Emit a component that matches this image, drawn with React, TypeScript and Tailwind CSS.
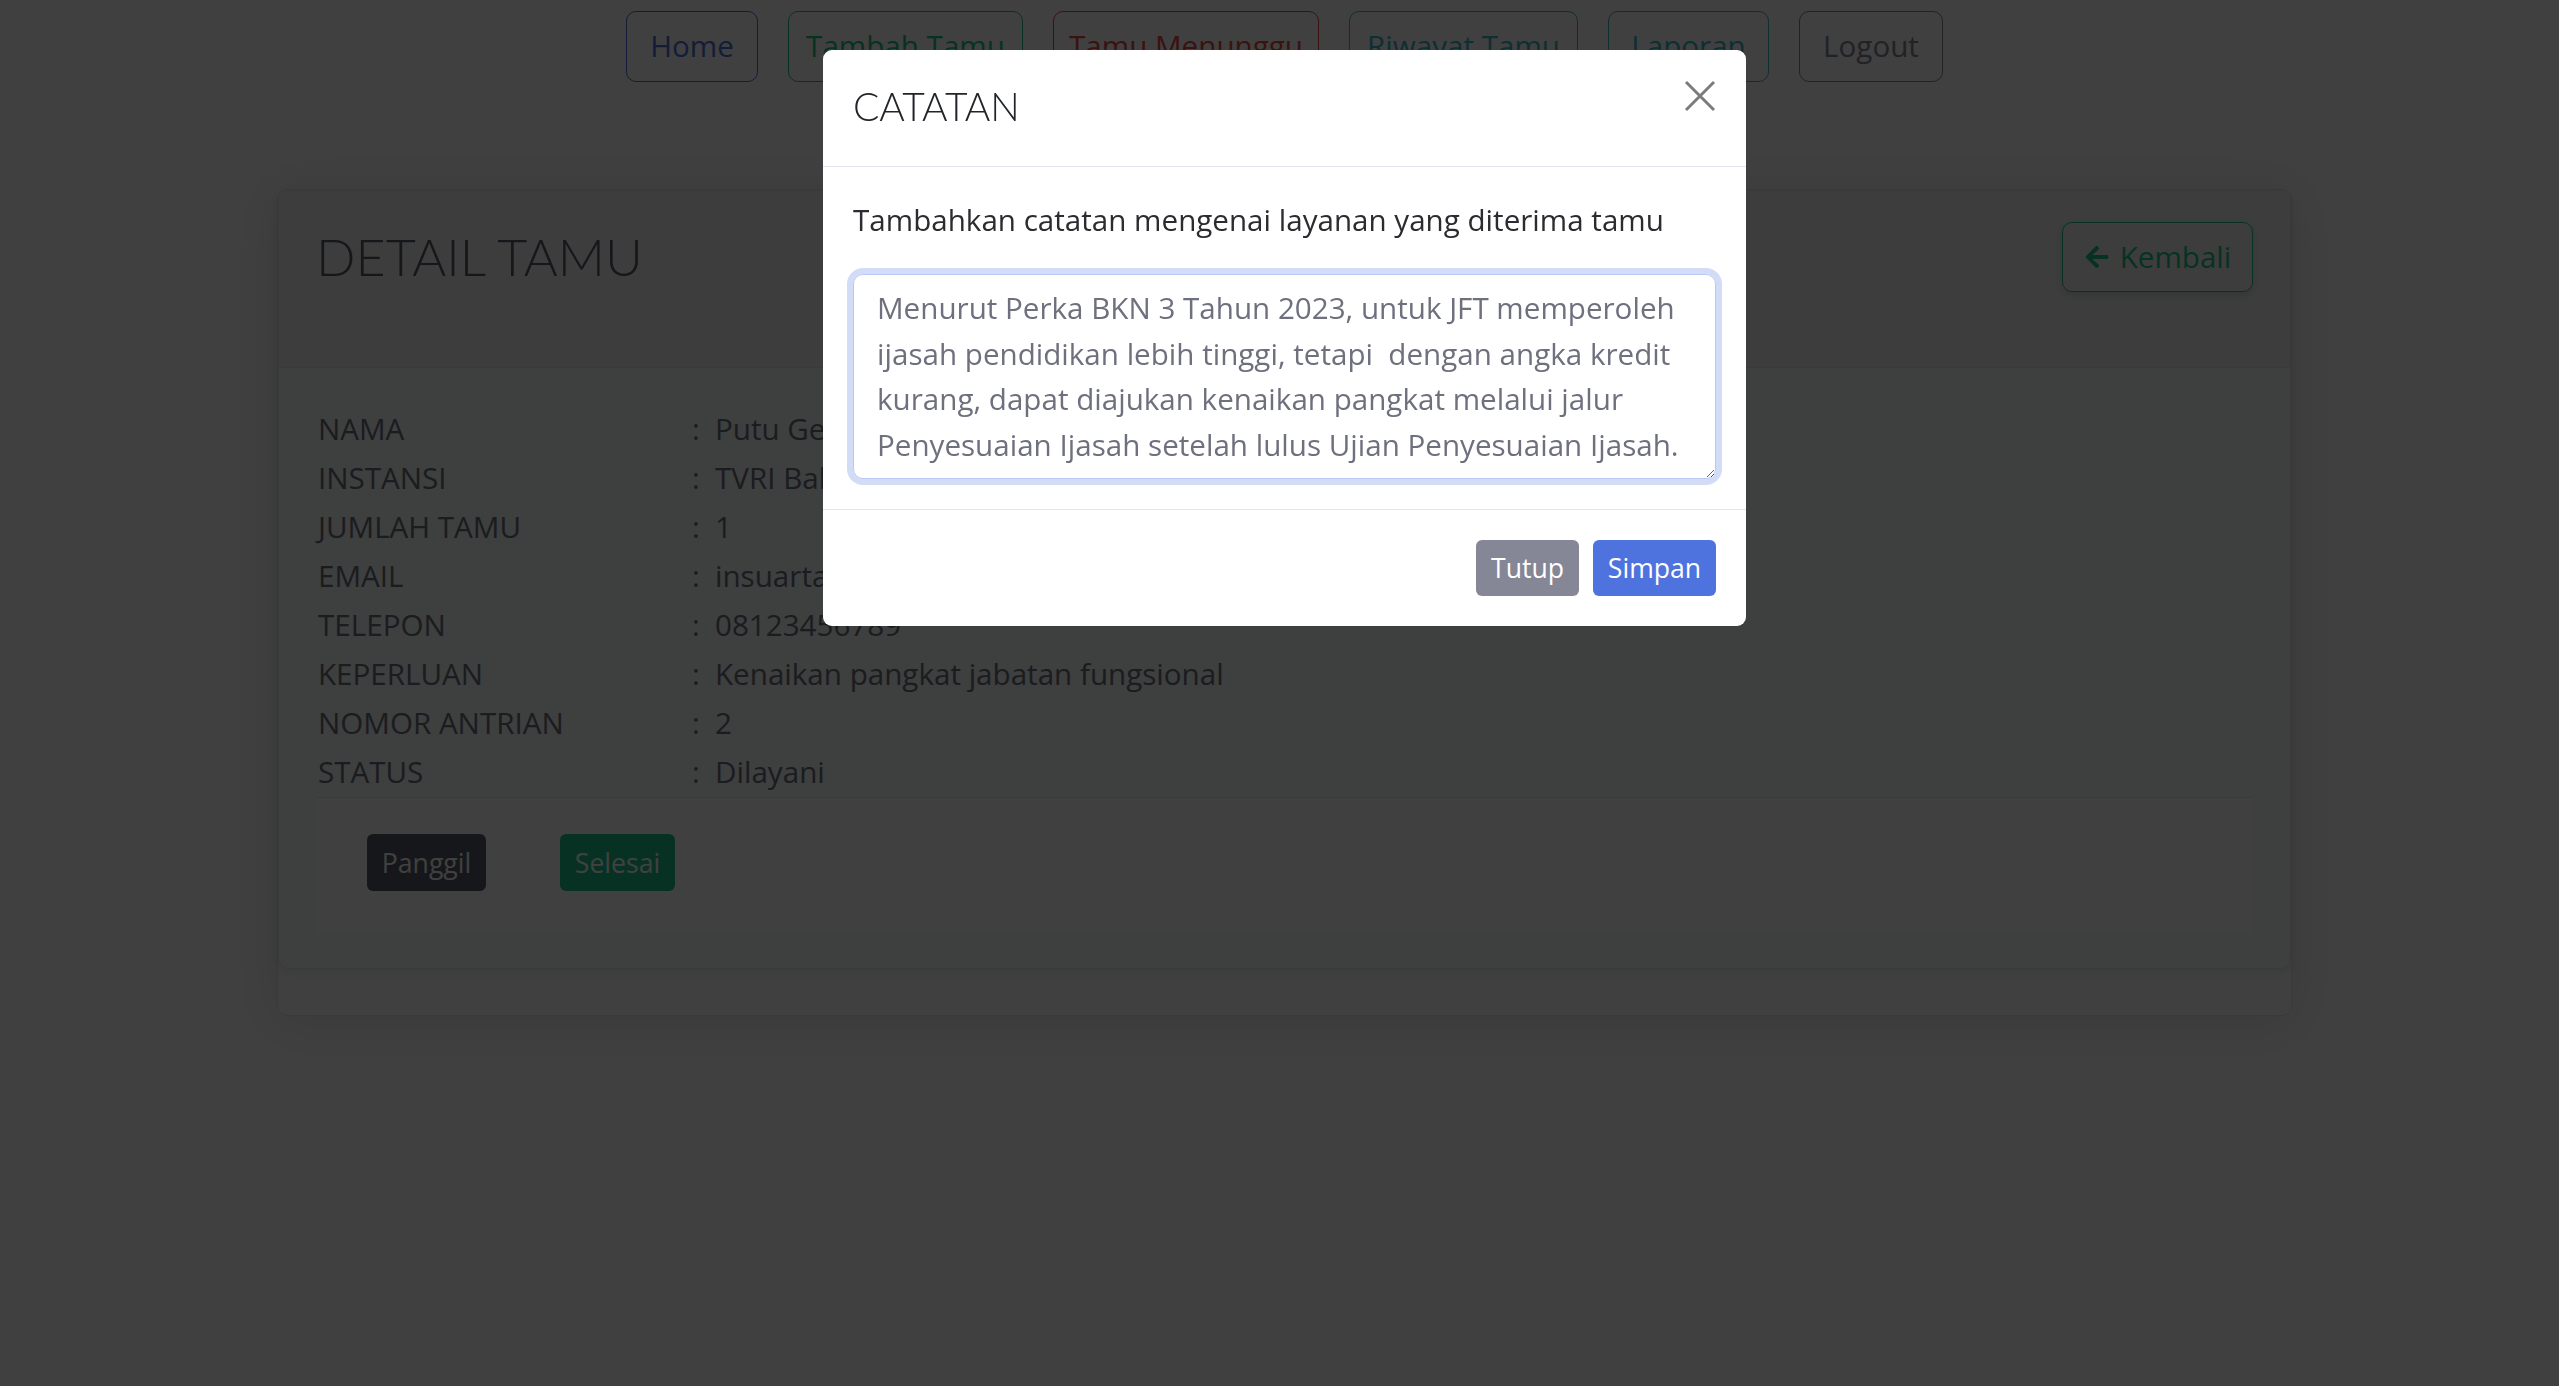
import { useEffect, useRef } from "react";
import { FaArrowLeft } from "react-icons/fa";

const navItems = [
  { label: "Home", cls: "w-[132px] border-[#4e73df] text-[#4e73df]" },
  { label: "Tambah Tamu", cls: "w-[235px] border-[#1cc88a] text-[#1cc88a]" },
  { label: "Tamu Menunggu", cls: "w-[266px] border-[#e74a3b] text-[#e74a3b]" },
  { label: "Riwayat Tamu", cls: "w-[229px] border-[#36b9cc] text-[#36b9cc]" },
  { label: "Laporan", cls: "w-[161px] border-[#36b9cc] text-[#36b9cc]" },
  { label: "Logout", cls: "w-[144px] border-[#858796] text-[#858796]" },
];

const details = [
  ["NAMA", "Putu Gede Insuarta"],
  ["INSTANSI", "TVRI Bali"],
  ["JUMLAH TAMU", "1"],
  ["EMAIL", "insuarta@gmail.com"],
  ["TELEPON", "08123456789"],
  ["KEPERLUAN", "Kenaikan pangkat jabatan fungsional"],
  ["NOMOR ANTRIAN", "2"],
  ["STATUS", "Dilayani"],
];

const note =
  "Menurut Perka BKN 3 Tahun 2023, untuk JFT memperoleh ijasah pendidikan lebih tinggi, tetapi  dengan angka kredit kurang, dapat diajukan kenaikan pangkat melalui jalur Penyesuaian Ijasah setelah lulus Ujian Penyesuaian Ijasah.";

function NoteModal() {
  const ref = useRef<HTMLTextAreaElement>(null);

  useEffect(() => {
    const el = ref.current;
    if (el) {
      el.focus();
      el.setSelectionRange(note.length, note.length);
    }
  }, []);

  return (
    <>
      <div className="fixed inset-0 z-40 bg-black/75" />
      <div className="fixed inset-0 z-50 flex items-start justify-center pl-[10px] pt-[50px]">
        <div className="w-[923px] overflow-hidden rounded-[9px] bg-white">
          <div className="flex h-[117px] items-start justify-between border-b border-[#e3e6f0] px-[30px] pt-[33px]">
            <h5 className="font-['Lato',sans-serif] text-[39px] font-light leading-[46px] text-[#212529]">
              CATATAN
            </h5>
            <button className="mt-[-3px] flex h-[32px] w-[32px] items-center justify-center">
              <svg width="32" height="32" viewBox="0 0 32 32">
                <path d="M2 2 L30 30 M30 2 L2 30" stroke="#7c7c7c" strokeWidth="3" />
              </svg>
            </button>
          </div>

          <div className="px-[30px] pb-[30px] pt-[30px]">
            <p className="mb-[32px] text-[29.6px] leading-[45px] text-[#2b2c30]">
              Tambahkan catatan mengenai layanan yang diterima tamu
            </p>
            <textarea
              ref={ref}
              defaultValue={note}
              rows={4}
              className="block h-[205px] w-full resize-y rounded-[10px] border border-[#bac8f3] px-[23px] py-[10px] text-[29.6px] leading-[45.6px] text-[#6e707e] caret-[#6e707e] shadow-[0_0_0_6px_rgba(78,115,223,0.25)] outline-none"
            />
          </div>

          <div className="flex items-center justify-end gap-[14px] border-t border-[#e3e6f0] px-[30px] pb-[30px] pt-[30px]">
            <button className="h-[56px] w-[103px] rounded-[6px] bg-[#858796] text-[26.6px] leading-[40px] text-white">
              Tutup
            </button>
            <button className="h-[56px] w-[123px] rounded-[6px] bg-[#4e73df] text-[26.6px] leading-[40px] text-white">
              Simpan
            </button>
          </div>
        </div>
      </div>
    </>
  );
}

export default function App() {
  return (
    <div className="relative h-screen overflow-hidden bg-white pl-[10px] font-['Open_Sans',sans-serif]">
      <nav className="flex justify-center gap-[30px] pt-[11px]">
        {navItems.map((item) => (
          <button
            key={item.label}
            className={`h-[71px] rounded-[10px] border bg-transparent text-[29.6px] leading-[44.4px] ${item.cls}`}
          >
            {item.label}
          </button>
        ))}
      </nav>

      <div className="mx-auto mt-[107px] w-[2015px] rounded-[10px] border border-[#e3e6f0] bg-white pb-[46px] shadow-[0_5px_52px_rgba(58,59,69,0.15)]">
        <div className="overflow-hidden rounded-[10px] border border-[#e3e6f0] bg-[#f7f9f9] shadow-[0_4px_10px_rgba(0,0,0,0.08)]">
          <div className="flex h-[177px] items-start justify-between border-b border-[#e3e6f0] bg-[#f1f3f3] px-[37px] pt-[31px]">
            <h3 className="mt-[3px] font-['Lato',sans-serif] text-[52px] font-light leading-[62px] text-[#5a5c69]">
              DETAIL TAMU
            </h3>
            <button className="flex h-[70px] w-[191px] items-center justify-center gap-[10px] rounded-[10px] border border-[#1cc88a] text-[29.6px] leading-[44.4px] text-[#1cc88a] shadow-[0_3px_8px_rgba(0,0,0,0.15)]">
              <FaArrowLeft className="h-[26px] w-[26px]" />
              Kembali
            </button>
          </div>

          <div className="px-[37px] pb-[35px] pt-[37px]">
            <div className="flex flex-col">
              {details.map(([label, value]) => (
                <div key={label} className="flex h-[49px] items-center text-[29.6px] leading-[44.4px] text-[#6e707e]">
                  <span className="w-[376px] pl-[2px]">{label}</span>
                  <span className="w-[23px]">:</span>
                  <span>{value}</span>
                </div>
              ))}
            </div>

            <div className="flex h-[136px] items-start gap-[74px] border-t border-[#e3e6f0] bg-white pl-[51px] pt-[36px]">
              <button className="h-[57px] w-[119px] rounded-[6px] bg-[#5a5c69] text-[26.6px] leading-[40px] text-white">
                Panggil
              </button>
              <button className="h-[57px] w-[115px] rounded-[6px] bg-[#1cc88a] text-[26.6px] leading-[40px] text-white">
                Selesai
              </button>
            </div>
          </div>
        </div>
      </div>

      <NoteModal />
    </div>
  );
}
